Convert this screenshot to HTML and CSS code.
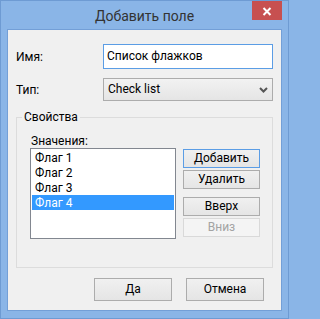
FILE: index.html
```html
<!DOCTYPE html>
<html lang="ru">
<head>
<meta charset="utf-8">
<title>Добавить поле</title>
<link rel="stylesheet" href="styles.css">
</head>
<body>
<div class="window">
  <div class="titlebar">
    <div class="title">Добавить поле</div>
    <div class="close">
      <svg width="10" height="9" viewBox="0 0 10 9"><path d="M1.5 1 L8.5 8 M8.5 1 L1.5 8" stroke="#fff" stroke-width="2" fill="none"/></svg>
    </div>
  </div>
  <div class="client">
    <div class="row row-name">
      <span class="lbl">Имя:</span>
      <div class="input">Список флажков</div>
    </div>
    <div class="row row-type">
      <span class="lbl">Тип:</span>
      <div class="select">
        <span>Check list</span>
        <svg class="chev" width="9" height="6" viewBox="0 0 9 6"><path d="M1 1 L4.5 4.5 L8 1" stroke="#555" stroke-width="2" fill="none"/></svg>
      </div>
    </div>
    <div class="group">
      <div class="legend">Свойства</div>
      <div class="group-body">
        <div class="values">
          <div class="values-lbl">Значения:</div>
          <div class="list">
            <div class="item">Флаг 1</div>
            <div class="item">Флаг 2</div>
            <div class="item">Флаг 3</div>
            <div class="item sel">Флаг 4</div>
          </div>
        </div>
        <div class="side">
          <div class="btn default">Добавить</div>
          <div class="btn">Удалить</div>
          <div class="btn gap">Вверх</div>
          <div class="btn disabled">Вниз</div>
        </div>
      </div>
    </div>
    <div class="footer">
      <div class="btn big">Да</div>
      <div class="btn big">Отмена</div>
    </div>
  </div>
</div>
</body>
</html>
```
FILE: styles.css
```css
html, body {
  margin: 0;
  padding: 0;
}
body {
  font-family: Roboto, "Noto Sans", sans-serif;
  font-size: 12px;
  color: #000;
  background: #8ab5e7;
}
.window {
  width: 289px;
  height: 319px;
  box-sizing: border-box;
  border: 1px solid #6e9bd3;
  background: #8ab5e7;
  display: flex;
  flex-direction: column;
}
.titlebar {
  height: 28px;
  display: grid;
  grid-template-columns: 1fr auto 1fr;
}
.title {
  grid-column: 2;
  align-self: center;
  font-size: 14px;
  color: #333;
  line-height: 20px;
  padding-top: 1px;
}
.close {
  grid-column: 3;
  justify-self: end;
  align-self: start;
  width: 30px;
  height: 19px;
  margin-right: 6px;
  background: #c75050;
  display: flex;
  align-items: center;
  justify-content: center;
}
.close svg { display: block; margin-top: 1px; }
.client {
  margin: 0 6px;
  height: 282px;
  box-sizing: border-box;
  border: 1px solid #739fd7;
  background: #f0f0f0;
  padding: 14px 7px 0 8px;
}
.row {
  display: flex;
  align-items: center;
}
.row-type { margin-top: 9px; }
.lbl {
  width: 87px;
  flex: none;
}
.input {
  width: 170px;
  height: 25px;
  box-sizing: border-box;
  border: 1px solid #5b9de5;
  background: #fff;
  padding: 0 3px;
  line-height: 23px;
}
.select {
  width: 170px;
  height: 23px;
  box-sizing: border-box;
  border: 1px solid #acacac;
  background: linear-gradient(#f2f2f2, #e5e5e5);
  padding: 0 3px 0 4px;
  line-height: 21px;
  display: flex;
  align-items: center;
  justify-content: space-between;
}
.chev { display: block; margin-right: 1px; margin-top: 1px; }
.group {
  margin-top: 16px;
  width: 257px;
  height: 151px;
  box-sizing: border-box;
  border: 1px solid #dcdcdc;
  padding: 0 0 0 13px;
}
.legend {
  margin: -9px 0 0 -8px;
  height: 16px;
  line-height: 16px;
  display: table;
  padding: 0 2px;
  background: #f0f0f0;
}
.group-body {
  display: flex;
  margin-top: 9px;
}
.values-lbl {
  line-height: 14px;
  padding-left: 1px;
}
.list {
  width: 146px;
  height: 91px;
  box-sizing: border-box;
  border: 1px solid #828790;
  background: #fff;
  padding: 1px;
}
.item {
  height: 15px;
  line-height: 16px;
  padding-left: 3px;
}
.item.sel {
  background: #3399ff;
  color: #fff;
}
.side {
  margin-left: 7px;
  padding-top: 15px;
  display: flex;
  flex-direction: column;
  gap: 2px;
}
.btn {
  width: 77px;
  height: 19px;
  box-sizing: border-box;
  border: 1px solid #acacac;
  background: linear-gradient(#f0f0f0, #e5e5e5);
  text-align: center;
  line-height: 17px;
}
.btn.default { border-color: #5b9de5; }
.btn.gap { margin-top: 6px; }
.btn.disabled {
  color: #a3a3a3;
  border-color: #d9d9d9;
  background: #f4f4f4;
}
.footer {
  display: flex;
  justify-content: flex-end;
  gap: 14px;
  margin-top: 10px;
  padding-right: 10px;
}
.btn.big {
  width: 78px;
  height: 23px;
  line-height: 21px;
}
```
